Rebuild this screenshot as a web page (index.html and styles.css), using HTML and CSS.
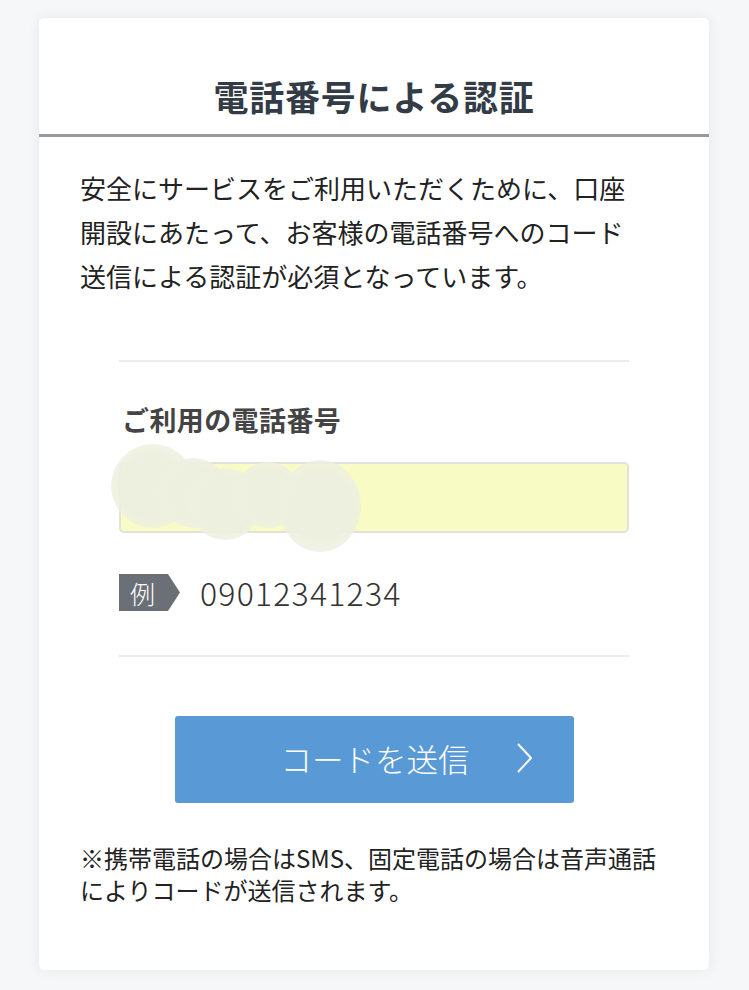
FILE: index.html
```html
<!DOCTYPE html>
<html lang="ja">
	<head>
		<meta charset="UTF-8">
		<title>電話番号による認証</title>
		<link rel="stylesheet" href="styles.css">
	</head>

	<body>

		<div class="card">
			<h1 class="card-title">電話番号による認証</h1>

			<div class="card-body">
				<p class="lead">安全にサービスをご利用いただくために、口座開設にあたって、お客様の電話番号へのコード送信による認証が必須となっています。</p>

				<div class="form">
					<label class="form-label" for="tel">ご利用の電話番号</label>
					<div class="field">
						<input class="field-input" id="tel" type="tel">
						<span class="smudge s1"></span>
						<span class="smudge s2"></span>
						<span class="smudge s3"></span>
						<span class="smudge s4"></span>
						<span class="smudge s5"></span>
					</div>
					<div class="example">
						<span class="example-tag">例</span>
						<span class="example-num">09012341234</span>
					</div>
				</div>

				<button class="btn" type="button">
					<span class="btn-text">コードを送信</span>
					<svg class="btn-arrow" width="16" height="30" viewBox="0 0 16 30">
						<path d="M2 1 L15 15 L2 29" fill="none" stroke="#fff" stroke-width="2"/>
					</svg>
				</button>

				<p class="note">※携帯電話の場合はSMS、固定電話の場合は音声通話によりコードが送信されます。</p>
			</div>
		</div>

	</body>

</html>
```

FILE: styles.css
```css
* { margin: 0; padding: 0; box-sizing: border-box }

body {
	background: #f6f7f9;
	font-family: "Noto Sans CJK JP", "Noto Sans", sans-serif;
	color: #222;
	padding: 18px 40px 21px 39px;
}

.card {
	background: #fff;
	border-radius: 5px;
	box-shadow: 0 0 14px rgba(0, 0, 0, 0.07);
	padding-bottom: 64px;
}

.card-title {
	font-size: 35px;
	font-weight: 700;
	letter-spacing: 0.8px;
	line-height: 50px;
	color: #333c46;
	text-align: center;
	padding: 53px 0 13px;
	border-bottom: 3px solid #999;
}

.card-body {
	padding: 29px 41px 0;
}

.lead {
	max-width: 560px;
	font-size: 26px;
	line-height: 44px;
	color: #222;
}

.form {
	margin: 62px 39px 0;
	padding: 40px 0 44px;
	border-top: 2px solid #ececec;
	border-bottom: 2px solid #ececec;
}

.form-label {
	display: block;
	font-size: 27px;
	font-weight: 700;
	letter-spacing: 0.4px;
	line-height: 36px;
	color: #444;
	padding-left: 3px;
}

.field {
	position: relative;
	margin-top: 24px;
}

.field-input {
	display: block;
	width: 100%;
	height: 71px;
	background: #f8fcc4;
	border: 2px solid #e2e2dc;
	border-radius: 5px;
	outline: none;
}

.smudge {
	position: absolute;
	border-radius: 50%;
	background: radial-gradient(circle, #edefdf 50%, rgba(238, 240, 224, 0.8) 72%, rgba(240, 242, 228, 0) 100%);
}

.s1 { left: -8px; top: -18px; width: 84px; height: 84px }
.s2 { left: 40px; top: -4px; width: 70px; height: 70px }
.s3 { left: 70px; top: 6px; width: 72px; height: 72px }
.s4 { left: 116px; top: 0; width: 66px; height: 66px }
.s5 { left: 160px; top: -2px; width: 82px; height: 92px }

.example {
	display: flex;
	align-items: center;
	gap: 20px;
	margin-top: 41px;
	height: 37px;
}

.example-tag {
	display: flex;
	align-items: center;
	width: 61px;
	height: 37px;
	padding-left: 11px;
	background: #6b7077;
	color: #fff;
	font-size: 25px;
	font-weight: 300;
	clip-path: polygon(0 0, 49px 0, 61px 50%, 49px 100%, 0 100%);
}

.example-num {
	font-size: 32px;
	font-weight: 300;
	line-height: 37px;
	color: #333;
	letter-spacing: 1.2px;
}

.btn {
	display: flex;
	align-items: center;
	justify-content: center;
	position: relative;
	width: 399px;
	height: 87px;
	margin: 59px auto 0;
	background: #5899d6;
	border: none;
	border-radius: 3px;
	font-family: inherit;
	color: #fff;
}

.btn-text {
	font-size: 31.5px;
	font-weight: 300;
	margin: 0 0 3px 2px;
}

.btn-arrow {
	position: absolute;
	right: 42px;
	top: 27px;
}

.note {
	margin-top: 39px;
	font-size: 24px;
	line-height: 32px;
	color: #222;
	max-width: 590px;
}
```
